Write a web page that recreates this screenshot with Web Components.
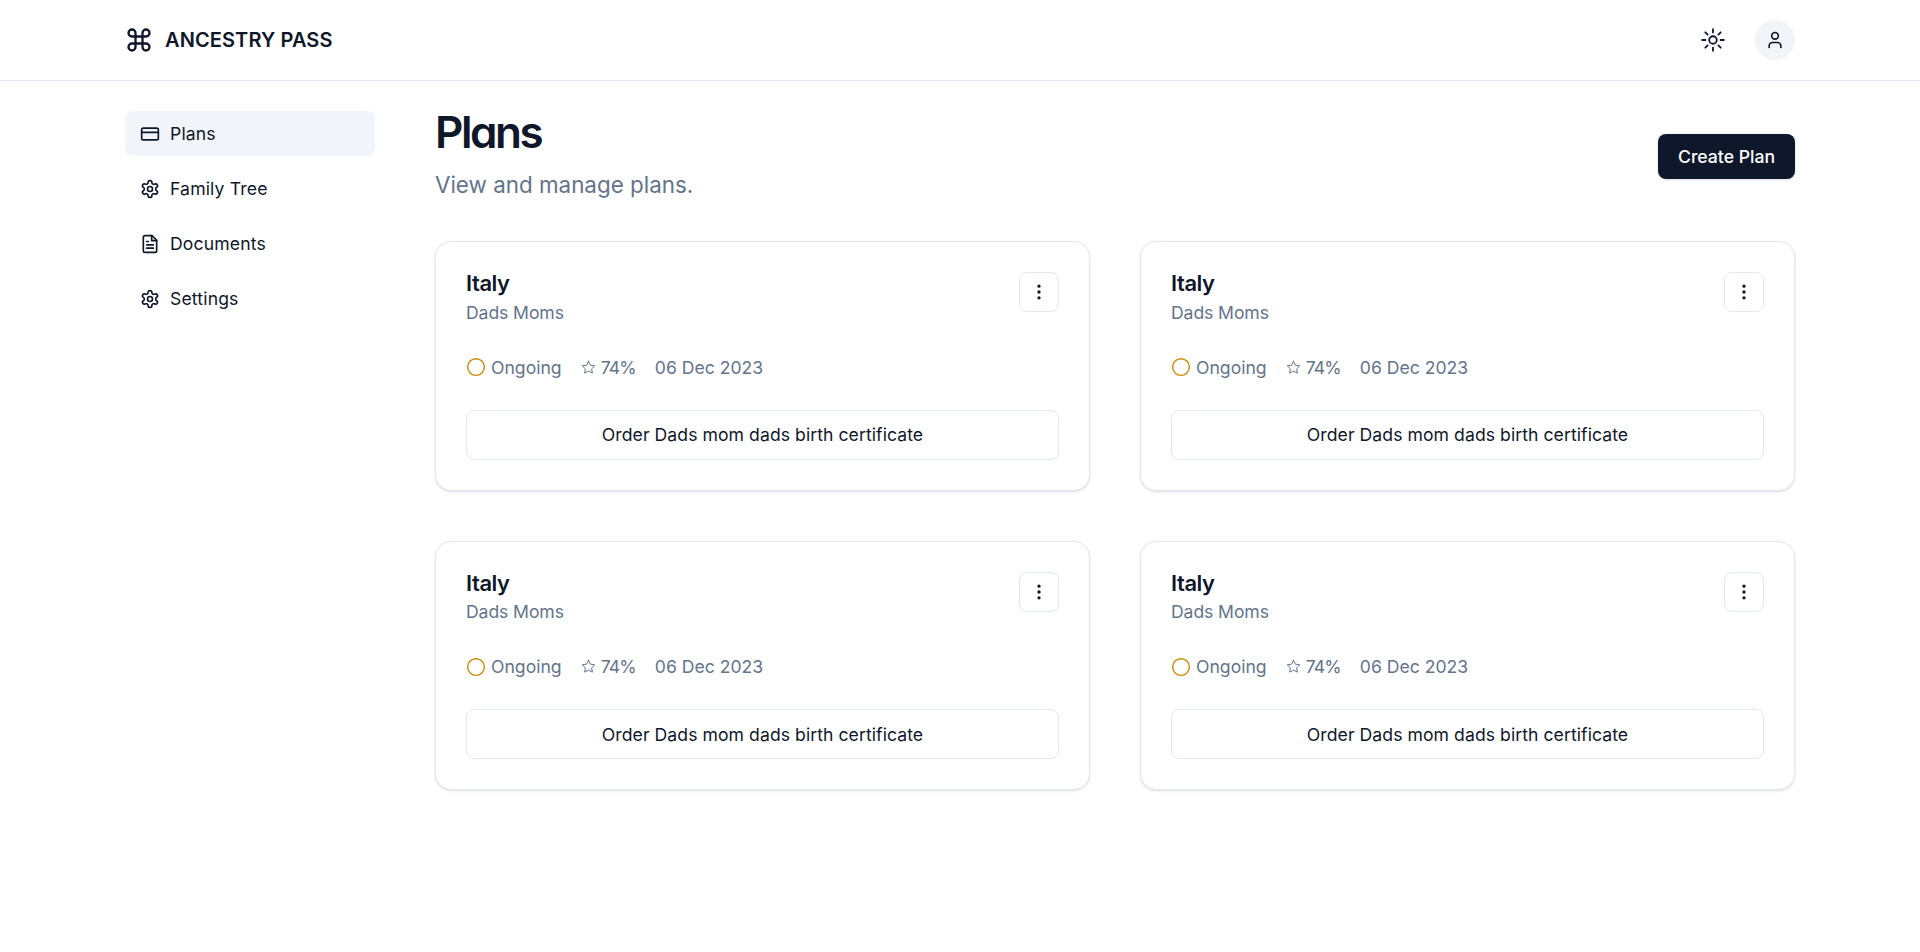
<!DOCTYPE html>
<html lang="en">
<head>
<meta charset="utf-8">
<title>Plans</title>
<style>
html, body { margin: 0; padding: 0; background: #fff; }
body { font-family: "Inter", "Liberation Sans", sans-serif; color: #0f172a; }
</style>
</head>
<body>
<app-shell>
  <app-header slot="header"></app-header>
  <side-nav slot="nav"></side-nav>
  <page-head title="Plans" subtitle="View and manage plans."></page-head>
  <div style="display:grid;grid-template-columns:1fr 1fr;gap:50px;">
    <plan-card></plan-card>
    <plan-card></plan-card>
    <plan-card></plan-card>
    <plan-card></plan-card>
  </div>
</app-shell>

<script>
const ICONS = {
  command: '<path d="M15 6v12a3 3 0 1 0 3-3H6a3 3 0 1 0 3 3V6a3 3 0 1 0-3 3h12a3 3 0 1 0-3-3"/>',
  card: '<rect x="2" y="5" width="20" height="14" rx="2"/><line x1="2" y1="10" x2="22" y2="10"/>',
  gear: '<path d="M12.22 2h-.44a2 2 0 0 0-2 2v.18a2 2 0 0 1-1 1.73l-.43.25a2 2 0 0 1-2 0l-.15-.08a2 2 0 0 0-2.73.73l-.22.38a2 2 0 0 0 .73 2.73l.15.1a2 2 0 0 1 1 1.72v.51a2 2 0 0 1-1 1.74l-.15.09a2 2 0 0 0-.73 2.73l.22.38a2 2 0 0 0 2.73.73l.15-.08a2 2 0 0 1 2 0l.43.25a2 2 0 0 1 1 1.73V20a2 2 0 0 0 2 2h.44a2 2 0 0 0 2-2v-.18a2 2 0 0 1 1-1.73l.43-.25a2 2 0 0 1 2 0l.15.08a2 2 0 0 0 2.73-.73l.22-.39a2 2 0 0 0-.73-2.73l-.15-.08a2 2 0 0 1-1-1.74v-.5a2 2 0 0 1 1-1.74l.15-.09a2 2 0 0 0 .73-2.73l-.22-.38a2 2 0 0 0-2.73-.73l-.15.08a2 2 0 0 1-2 0l-.43-.25a2 2 0 0 1-1-1.73V4a2 2 0 0 0-2-2z"/><circle cx="12" cy="12" r="3"/>',
  file: '<path d="M14.5 2H6a2 2 0 0 0-2 2v16a2 2 0 0 0 2 2h12a2 2 0 0 0 2-2V7.5L14.5 2z"/><polyline points="14 2 14 8 20 8"/><line x1="16" y1="13" x2="8" y2="13"/><line x1="16" y1="17" x2="8" y2="17"/><line x1="10" y1="9" x2="8" y2="9"/>',
  sun: '<circle cx="12" cy="12" r="3.5"/><path d="M12 2v3M12 19v3M4.93 4.93l2.12 2.12M16.95 16.95l2.12 2.12M2 12h3M19 12h3M7.05 16.95l-2.12 2.12M19.07 4.93l-2.12 2.12"/>',
  user: '<path d="M19 21v-2a4 4 0 0 0-4-4H9a4 4 0 0 0-4 4v2"/><circle cx="12" cy="7" r="4"/>',
  dots: '<circle cx="12" cy="12" r="1"/><circle cx="12" cy="5" r="1"/><circle cx="12" cy="19" r="1"/>',
  star: '<polygon points="12 2 15.09 8.26 22 9.27 17 14.14 18.18 21.02 12 17.77 5.82 21.02 7 14.14 2 9.27 8.91 8.26 12 2"/>',
  ring: '<circle cx="12" cy="12" r="10"/>'
};

function icon(name, size, extra = "") {
  return `<svg width="${size}" height="${size}" viewBox="0 0 24 24" fill="none" stroke="currentColor" stroke-width="2" stroke-linecap="round" stroke-linejoin="round" style="display:block;flex:none;${extra}">${ICONS[name]}</svg>`;
}

class AppShell extends HTMLElement {
  constructor() {
    super();
    this.attachShadow({ mode: "open" });
    this.shadowRoot.innerHTML = `
      <style>
:host { display: block; min-height: 952px; }
.body {
  display: flex;
  gap: 60px;
  padding: 31px 125px 0;
}
.nav { width: 250px; flex: none; margin-top: -1px; }
main { flex: 1; min-width: 0; }
      </style>
      <slot name="header"></slot>
      <div class="body">
        <div class="nav"><slot name="nav"></slot></div>
        <main><slot></slot></main>
      </div>
    `;
  }
}

class AppHeader extends HTMLElement {
  constructor() {
    super();
    this.attachShadow({ mode: "open" });
    this.shadowRoot.innerHTML = `
      <style>
:host {
  display: flex;
  align-items: center;
  justify-content: space-between;
  height: 80px;
  padding: 0 125px;
  border-bottom: 1px solid #e2e8f0;
}
.brand {
  display: flex;
  align-items: center;
  gap: 12px;
  font-size: 20px;
  font-weight: 600;
  letter-spacing: 0.1px;
  color: #0f172a;
}
.actions { display: flex; align-items: center; gap: 29px; color: #0f172a; }
.avatar {
  width: 40px;
  height: 40px;
  border-radius: 50%;
  background: #f1f5f9;
  display: flex;
  align-items: center;
  justify-content: center;
}
      </style>
      <div class="brand">${icon("command", 28)}<span>ANCESTRY PASS</span></div>
      <div class="actions">
        ${icon("sun", 26, "stroke-width:1.7;")}
        <div class="avatar">${icon("user", 20)}</div>
      </div>
    `;
  }
}

class SideNav extends HTMLElement {
  constructor() {
    super();
    this.attachShadow({ mode: "open" });
    const items = [
      ["card", "Plans", true],
      ["gear", "Family Tree"],
      ["file", "Documents"],
      ["gear", "Settings"]
    ];
    this.shadowRoot.innerHTML = `
      <style>
:host { display: flex; flex-direction: column; gap: 10px; }
a {
  display: flex;
  align-items: center;
  gap: 10px;
  height: 45px;
  padding: 0 15px;
  border-radius: 8px;
  font-size: 17.6px;
  font-weight: 400;
  letter-spacing: 0.15px;
  color: #0f172a;
}
a.active { background: #f1f5f9; }
      </style>
      ${items.map(i => `<a class="${i[2] ? "active" : ""}">${icon(i[0], 20)}<span>${i[1]}</span></a>`).join("")}
    `;
  }
}

class PageHead extends HTMLElement {
  constructor() {
    super();
    this.attachShadow({ mode: "open" });
    this.shadowRoot.innerHTML = `
      <style>
:host {
  display: flex;
  align-items: center;
  justify-content: space-between;
  margin-bottom: 40px;
}
h1 {
  margin: 0;
  font-family: "Inter", "Liberation Sans", sans-serif;
  font-feature-settings: "cv11" 1;
  font-size: 44px;
  line-height: 40px;
  font-weight: 600;
  letter-spacing: -0.055em;
  color: #0f172a;
}
p { margin: 17px 0 0; font-size: 22.4px; line-height: 32px; color: #64748b; }
button {
  font: 500 17.6px "Inter", "Liberation Sans", sans-serif;
  color: #fff;
  background: #0f172a;
  border: none;
  border-radius: 8px;
  width: 137px;
  height: 45px;
  padding: 0;
  box-shadow: 0 1px 3px rgba(15, 23, 42, 0.15);
}
      </style>
      <div>
          <h1>${this.getAttribute("title")}</h1>
          <p>${this.getAttribute("subtitle")}</p>
      </div>
      <button>Create Plan</button>
    `;
  }
}

class PlanCard extends HTMLElement {
  constructor() {
    super();
    this.attachShadow({ mode: "open" });
    this.shadowRoot.innerHTML = `
      <style>
:host {
  display: block;
  box-sizing: border-box;
  height: 249.6px;
  padding: 30px;
  border: 1px solid #e2e8f0;
  border-radius: 16px;
  background: #fff;
  box-shadow: 0 1px 3px rgba(0, 0, 0, 0.1), 0 1px 2px -1px rgba(0, 0, 0, 0.1);
}
.top { display: flex; justify-content: space-between; align-items: flex-start; }
h3 { margin: 0; font-size: 22px; line-height: 22px; font-weight: 600; letter-spacing: -0.02em; color: #0f172a; }
.sub { margin-top: 5.5px; font-size: 17.6px; line-height: 26px; letter-spacing: -0.1px; color: #64748b; }
.more {
  box-sizing: border-box;
  width: 40px;
  height: 40px;
  border: 1px solid #e2e8f0;
  border-radius: 8px;
  display: flex;
  align-items: center;
  justify-content: center;
  color: #0f172a;
}
.meta {
  display: flex;
  align-items: center;
  gap: 19px;
  margin-top: 28.5px;
  height: 26px;
  font-size: 17.6px;
  color: #64748b;
}
.meta span { display: flex; align-items: center; gap: 5px; }
.pct { letter-spacing: -0.8px; }
.task {
  box-sizing: border-box;
  height: 50px;
  margin-top: 29.6px;
  border: 1px solid #e2e8f0;
  border-radius: 8px;
  display: flex;
  align-items: center;
  justify-content: center;
  font-size: 17.6px;
  font-weight: 400;
  letter-spacing: 0.065px;
  color: #0f172a;
}
      </style>
      <div class="top">
        <div>
          <h3>Italy</h3>
          <div class="sub">Dads Moms</div>
        </div>
        <div class="more">${icon("dots", 20)}</div>
      </div>
      <div class="meta">
        <span>${icon("ring", 20, "color:#ca8a04;stroke-width:1.7;")}Ongoing</span>
        <span class="pct">${icon("star", 15, "stroke-width:1.6;")}74%</span>
        <span>06 Dec 2023</span>
      </div>
      <div class="task">Order Dads mom dads birth certificate</div>
    `;
  }
}

customElements.define("app-shell", AppShell);
customElements.define("app-header", AppHeader);
customElements.define("side-nav", SideNav);
customElements.define("page-head", PageHead);
customElements.define("plan-card", PlanCard);
</script>
</body>
</html>
